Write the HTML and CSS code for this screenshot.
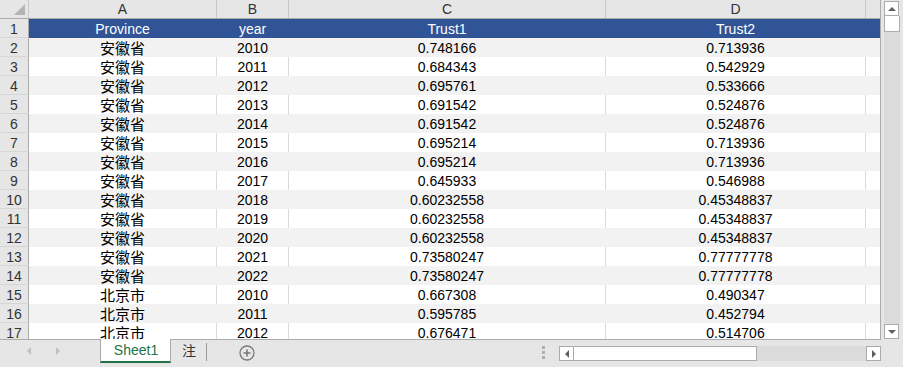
FILE: index.html
```html
<!DOCTYPE html>
<html lang="zh-CN">
<head>
    <meta charset="UTF-8">
    <meta name="viewport" content="width=device-width, initial-scale=1.0">
    <title>Sheet1</title>
    <link rel="stylesheet" href="styles.css">
</head>
<body>
    <div class="app">
        <div class="main">
            <div class="sheet">
                <div class="row colhead">
                    <div class="corner"><span class="corner-tri"></span></div>
                    <div>A</div>
                    <div>B</div>
                    <div>C</div>
                    <div>D</div>
                    <div></div>
                </div>
                <div class="rows">
                    <div class="row title"><div class="num">1</div><div>Province</div><div>year</div><div>Trust1</div><div>Trust2</div><div></div></div>
                    <div class="row band"><div class="num">2</div><div class="cn">安徽省</div><div>2010</div><div>0.748166</div><div>0.713936</div><div></div></div>
                    <div class="row"><div class="num">3</div><div class="cn">安徽省</div><div>2011</div><div>0.684343</div><div>0.542929</div><div></div></div>
                    <div class="row band"><div class="num">4</div><div class="cn">安徽省</div><div>2012</div><div>0.695761</div><div>0.533666</div><div></div></div>
                    <div class="row"><div class="num">5</div><div class="cn">安徽省</div><div>2013</div><div>0.691542</div><div>0.524876</div><div></div></div>
                    <div class="row band"><div class="num">6</div><div class="cn">安徽省</div><div>2014</div><div>0.691542</div><div>0.524876</div><div></div></div>
                    <div class="row"><div class="num">7</div><div class="cn">安徽省</div><div>2015</div><div>0.695214</div><div>0.713936</div><div></div></div>
                    <div class="row band"><div class="num">8</div><div class="cn">安徽省</div><div>2016</div><div>0.695214</div><div>0.713936</div><div></div></div>
                    <div class="row"><div class="num">9</div><div class="cn">安徽省</div><div>2017</div><div>0.645933</div><div>0.546988</div><div></div></div>
                    <div class="row band"><div class="num">10</div><div class="cn">安徽省</div><div>2018</div><div>0.60232558</div><div>0.45348837</div><div></div></div>
                    <div class="row"><div class="num">11</div><div class="cn">安徽省</div><div>2019</div><div>0.60232558</div><div>0.45348837</div><div></div></div>
                    <div class="row band"><div class="num">12</div><div class="cn">安徽省</div><div>2020</div><div>0.60232558</div><div>0.45348837</div><div></div></div>
                    <div class="row"><div class="num">13</div><div class="cn">安徽省</div><div>2021</div><div>0.73580247</div><div>0.77777778</div><div></div></div>
                    <div class="row band"><div class="num">14</div><div class="cn">安徽省</div><div>2022</div><div>0.73580247</div><div>0.77777778</div><div></div></div>
                    <div class="row"><div class="num">15</div><div class="cn">北京市</div><div>2010</div><div>0.667308</div><div>0.490347</div><div></div></div>
                    <div class="row band"><div class="num">16</div><div class="cn">北京市</div><div>2011</div><div>0.595785</div><div>0.452794</div><div></div></div>
                    <div class="row"><div class="num">17</div><div class="cn">北京市</div><div>2012</div><div>0.676471</div><div>0.514706</div><div></div></div>
                </div>
            </div>
            <div class="vscroll">
                <div class="sbtn"><span class="tri-up"></span></div>
                <div class="vthumb"></div>
                <div class="vtrack"></div>
                <div class="sbtn"><span class="tri-down"></span></div>
            </div>
        </div>
        <div class="tabbar">
            <div class="nav">
                <span class="tri-left light"></span>
                <span class="tri-right light"></span>
            </div>
            <div class="tab active">Sheet1</div>
            <div class="tab">注</div>
            <div class="tab-sep"></div>
            <div class="add">
                <svg width="16" height="16" viewBox="0 0 16 16">
                    <circle cx="8" cy="8" r="7" fill="none" stroke="#7a7a7a" stroke-width="1.3"/>
                    <path d="M8 4.5v7M4.5 8h7" stroke="#7a7a7a" stroke-width="1.6"/>
                </svg>
            </div>
            <div class="dots"><span></span><span></span><span></span></div>
            <div class="hscroll">
                <div class="sbtn"><span class="tri-left"></span></div>
                <div class="hthumb"></div>
                <div class="htrack"></div>
                <div class="sbtn"><span class="tri-right"></span></div>
            </div>
        </div>
    </div>
</body>
</html>
```

FILE: styles.css
```css
body {
    margin: 0;
    background-color: #e6e6e6;
    font-family: "Liberation Sans", "Noto Sans CJK SC", sans-serif;
    font-size: 14px;
    color: #000;
}

.app {
    width: 903px;
    height: 367px;
    display: flex;
    flex-direction: column;
    overflow: hidden;
}

.main {
    display: flex;
    height: 340px;
}

/* grid */

.sheet {
    width: 881px;
    height: 340px;
    border-right: 1px solid #ababab;
    border-bottom: 1px solid #ababab;
    box-sizing: border-box;
    background-color: #fff;
    display: flex;
    flex-direction: column;
    overflow: hidden;
}

.row {
    display: grid;
    grid-template-columns: 29px 188px 72px 317px 260px 15px;
    height: 19px;
    flex: none;
}

.row > div {
    box-sizing: border-box;
    border-right: 1px solid transparent;
    text-align: center;
    line-height: 17px;
    padding-top: 2px;
    white-space: nowrap;
    overflow: hidden;
}

.row > div:not(.num) {
    border-right-color: #dadada;
}

.row .cn {
    font-size: 15px;
}

.row .num {
    background-color: #e6e6e6;
    border-right: 1px solid #ababab;
    border-bottom: 1px solid #d6d6d6;
    color: #333;
}

.rows {
    flex: 1;
    overflow: hidden;
}

.band {
    background-color: #f2f2f2;
}

.band > div:not(.num) {
    border-right-color: #f2f2f2;
}

.title {
    background-color: #305496;
    color: #fff;
}

.title > div:not(.num) {
    border-right-color: #305496;
}

.colhead {
    background-color: #e6e6e6;
    border-bottom: 1px solid #ababab;
    box-sizing: border-box;
    color: #333;
}

.colhead > div {
    line-height: 16px;
    padding-top: 1px;
}

.colhead > div:not(.num) {
    border-right-color: #c8c8c8;
}

.colhead .corner {
    border-right: 1px solid #ababab;
    display: flex;
    justify-content: flex-end;
    align-items: flex-end;
    padding: 0 3px 3px 0;
}

.corner-tri {
    width: 0;
    height: 0;
    border-left: 11px solid transparent;
    border-bottom: 11px solid #b4b4b4;
}

/* scroll bars */

.vscroll {
    width: 22px;
    padding: 1px 3px 1px 3px;
    box-sizing: border-box;
    display: flex;
    flex-direction: column;
}

.sbtn {
    width: 15px;
    height: 15px;
    flex: none;
    box-sizing: border-box;
    border: 1px solid #ababab;
    background-color: #fff;
    display: flex;
    align-items: center;
    justify-content: center;
}

.vthumb {
    height: 16px;
    flex: none;
    box-sizing: border-box;
    border: 1px solid #ababab;
    border-top: none;
    background-color: #fff;
}

.vtrack {
    flex: 1;
    background-color: #dbdbdb;
}

.tri-up, .tri-down, .tri-left, .tri-right {
    width: 0;
    height: 0;
}

.tri-up {
    border-left: 4px solid transparent;
    border-right: 4px solid transparent;
    border-bottom: 4px solid #606060;
}

.tri-down {
    border-left: 4px solid transparent;
    border-right: 4px solid transparent;
    border-top: 4px solid #606060;
}

.tri-left {
    border-top: 4px solid transparent;
    border-bottom: 4px solid transparent;
    border-right: 4px solid #606060;
}

.tri-right {
    border-top: 4px solid transparent;
    border-bottom: 4px solid transparent;
    border-left: 4px solid #606060;
}

.tri-left.light {
    border-right-color: #c0c0c0;
}

.tri-right.light {
    border-left-color: #c0c0c0;
}

/* sheet tabs */

.tabbar {
    height: 27px;
    display: flex;
    align-items: flex-start;
}

.nav {
    width: 100px;
    height: 22px;
    display: flex;
    align-items: center;
    padding-left: 27px;
    gap: 25px;
    box-sizing: border-box;
}

.tab {
    height: 23px;
    line-height: 22px;
    padding: 0 10px 0 11px;
    color: #333;
    font-size: 14px;
    box-sizing: border-box;
}

.tab.active {
    width: 71px;
    text-align: center;
    background-color: #fff;
    color: #217346;
    border-left: 1px solid #ababab;
    border-right: 1px solid #ababab;
    border-bottom: 2px solid #217346;
    margin-top: -1px;
    height: 24px;
    line-height: 23px;
}

.tab-sep {
    width: 1px;
    height: 18px;
    margin-top: 3px;
    background-color: #9c9c9c;
}

.add {
    margin: 5px 0 0 32px;
    height: 16px;
}

.dots {
    margin: 6px 0 0 287px;
    width: 3px;
    display: flex;
    flex-direction: column;
    gap: 2px;
}

.dots span {
    width: 3px;
    height: 3px;
    background-color: #b0b0b0;
}

.hscroll {
    margin: 6px 0 0 14px;
    width: 322px;
    height: 15px;
    display: flex;
}

.hthumb {
    width: 183px;
    box-sizing: border-box;
    border: 1px solid #ababab;
    border-left: none;
    background-color: #fff;
}

.htrack {
    flex: 1;
    background-color: #dbdbdb;
}
```
